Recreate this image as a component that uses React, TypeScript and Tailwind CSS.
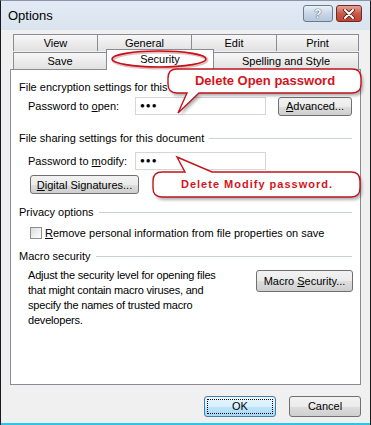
import React from 'react'

const tabBase =
  'flex items-center justify-center border border-b-0 border-[#898c95] bg-gradient-to-b from-[#f7f7f7] to-[#e1e1e1] text-[11px] text-black'

function Btn({ children, className = '' }: { children: React.ReactNode; className?: string }) {
  return (
    <div
      className={`flex items-center justify-center rounded-[3px] border border-[#707070] bg-[linear-gradient(#f2f2f2_0%,#ebebeb_50%,#dddddd_51%,#cfcfcf_100%)] text-[11px] text-black ${className}`}
    >
      <span>{children}</span>
    </div>
  )
}

function Section({ title }: { title: string }) {
  return (
    <div className="flex h-[14px] items-center gap-[5px] pr-[8px]">
      <span className="whitespace-nowrap">{title}</span>
      <div className="h-px flex-1 bg-[#c9d1d6]" />
    </div>
  )
}

function Field() {
  return (
    <div className="flex h-[18px] w-[131px] items-center border border-[#d3d6dc] bg-white pl-[4px] text-[8px] tracking-[1px]">
      ●●●
    </div>
  )
}

export default function App() {
  return (
    <div className="relative flex h-[425px] w-[371px] flex-col overflow-hidden border-x border-t border-x-[#1a1a1a] border-t-[#8a96a6] bg-[#f0f0f0] font-['Liberation_Sans',Arial,sans-serif] text-[11px] text-black">
      {/* Title bar */}
      <div className="flex h-[29px] shrink-0 items-start justify-between bg-gradient-to-b from-[#e2ebf5] to-[#dae4ef] pl-[7px] pr-[8px]">
        <span className="mt-[7px] text-[13px] leading-[16px] text-black">Options</span>
        <div className="mt-[4px] flex gap-[3px]">
          <div className="flex h-[17px] w-[30px] items-center justify-center rounded-[3px] border border-[#6d7a8b] bg-gradient-to-b from-[#e9f0f8] via-[#c9d6e6] to-[#b7c8dc] text-[12px] font-bold leading-none text-white [text-shadow:0_0_1px_#3b4a5e,0_0_1px_#3b4a5e]">
            ?
          </div>
          <div className="flex h-[17px] w-[26px] items-center justify-center rounded-[3px] border border-[#6e2a24] bg-gradient-to-b from-[#e8a496] via-[#c75a4a] to-[#c34030]">
            <svg width="12" height="10" viewBox="0 0 12 10">
              <path d="M2 1 L10 9 M10 1 L2 9" stroke="#4a1a14" strokeWidth="3.6" strokeLinecap="round" />
              <path d="M2 1 L10 9 M10 1 L2 9" stroke="#ffffff" strokeWidth="2" strokeLinecap="round" />
            </svg>
          </div>
        </div>
      </div>

      {/* Body */}
      <div className="flex flex-1 flex-col pl-[9px] pt-[4px]">
        {/* Tabs */}
        <div className="ml-[3px] flex h-[17px]">
          <div className={`${tabBase} w-[85px]`}>View</div>
          <div className={`${tabBase} -ml-px w-[95px]`}>General</div>
          <div className={`${tabBase} -ml-px w-[86px]`}>Edit</div>
          <div className={`${tabBase} -ml-px w-[83px]`}>Print</div>
        </div>
        <div className="relative z-10 ml-[3px] -mt-[2px] flex h-[20px] items-end">
          <div className={`${tabBase} h-[17px] w-[94px]`}>Save</div>
          <div className="-ml-px -mb-px flex h-[21px] w-[108px] items-start justify-center border border-b-0 border-[#898c95] bg-white pt-px text-[11px]">
            Security
          </div>
          <div className={`${tabBase} -ml-px h-[17px] w-[146px]`}>Spelling and Style</div>
        </div>

        {/* Panel */}
        <div className="flex h-[316px] w-[351px] flex-col border border-[#898c95] bg-white pl-[8px] pt-[10px] leading-[14px]">
          <Section title="File encryption settings for this document" />
          <div className="mt-[3px] flex h-[18px] items-center pl-[9px]">
            <span className="w-[107px]">
              Password to <u>o</u>pen:
            </span>
            <Field />
            <Btn className="ml-[12px] h-[19px] w-[74px]">
              <u>A</u>dvanced...
            </Btn>
          </div>

          <div className="mt-[16px]">
            <Section title="File sharing settings for this document" />
          </div>
          <div className="mt-[7px] flex h-[18px] items-center pl-[9px]">
            <span className="w-[107px]">
              Password to <u>m</u>odify:
            </span>
            <Field />
          </div>
          <div className="mt-[5px] pl-[11px]">
            <Btn className="h-[19px] w-[109px]">
              <u>D</u>igital Signatures...
            </Btn>
          </div>

          <div className="mt-[11px]">
            <Section title="Privacy options" />
          </div>
          <div className="mt-[7px] flex h-[14px] items-center gap-[3px] pl-[11px]">
            <div className="h-[12px] w-[12px] border border-[#8e8f8f] bg-gradient-to-br from-[#dcdcdc] to-[#ffffff]" />
            <span>
              <u>R</u>emove personal information from file properties on save
            </span>
          </div>

          <div className="mt-[9px]">
            <Section title="Macro security" />
          </div>
          <div className="mt-[5px] flex items-start pl-[9px]">
            <p className="w-[218px] whitespace-nowrap leading-[15px] tracking-[-0.2px]">
              Adjust the security level for opening files
              <br />
              that might contain macro viruses, and
              <br />
              specify the names of trusted macro
              <br />
              developers.
            </p>
            <Btn className="ml-[10px] mt-[2px] h-[22px] w-[97px]">
              Macro <u>S</u>ecurity...
            </Btn>
          </div>
        </div>

        {/* Bottom buttons */}
        <div className="mt-[11px] flex justify-end gap-[13px] pr-[9px]">
          <div className="flex h-[21px] w-[72px] items-center justify-center rounded-[3px] border border-[#3c7fb1] bg-[linear-gradient(#eaf6fd_0%,#d9f0fc_50%,#bee6fd_51%,#a7d9f5_100%)] p-[2px]">
            <div className="flex h-full w-full items-center justify-center border border-dotted border-black">OK</div>
          </div>
          <Btn className="h-[21px] w-[72px]">Cancel</Btn>
        </div>
      </div>
      <div className="h-[2px] shrink-0 bg-[#29c6e8]" />

      {/* Annotations */}
      <svg className="pointer-events-none absolute left-[-1px] top-[-1px] z-20" width="371" height="425" viewBox="0 0 371 425">
        <defs>
          <filter id="sh" x="-10%" y="-30%" width="130%" height="180%">
            <feGaussianBlur stdDeviation="1.5" />
          </filter>
        </defs>
        <ellipse cx="159" cy="59" rx="47" ry="8" fill="none" stroke="#8a0000" strokeOpacity="0.25" strokeWidth="3" transform="translate(1 1)" />
        <ellipse cx="159" cy="59" rx="47" ry="8" fill="none" stroke="#c8101a" strokeWidth="1.6" />

        <path
          d="M 177 69 H 352 Q 361 69 361 78 V 84 Q 361 93 352 93 H 199 L 178 113 L 187 93 H 177 Q 168 93 168 84 V 78 Q 168 69 177 69 Z"
          fill="#000"
          fillOpacity="0.3"
          transform="translate(2 3)"
          filter="url(#sh)"
        />
        <path
          d="M 177 69 H 352 Q 361 69 361 78 V 84 Q 361 93 352 93 H 199 L 178 113 L 187 93 H 177 Q 168 93 168 84 V 78 Q 168 69 177 69 Z"
          fill="#ffffff"
          stroke="#c0141c"
          strokeWidth="1.4"
        />

        <path
          d="M 162 172 H 185 L 177 157 L 212 172 H 351 Q 360 172 360 181 V 188 Q 360 197 351 197 H 162 Q 153 197 153 188 V 181 Q 153 172 162 172 Z"
          fill="#000"
          fillOpacity="0.3"
          transform="translate(2 3)"
          filter="url(#sh)"
        />
        <path
          d="M 162 172 H 185 L 177 157 L 212 172 H 351 Q 360 172 360 181 V 188 Q 360 197 351 197 H 162 Q 153 197 153 188 V 181 Q 153 172 162 172 Z"
          fill="#ffffff"
          stroke="#c0141c"
          strokeWidth="1.4"
        />
      </svg>
      <div className="pointer-events-none absolute left-[168px] top-[68px] z-30 flex h-[24px] w-[192px] items-center justify-center text-[13px] font-bold text-[#d3141c]">
        Delete Open password
      </div>
      <div className="pointer-events-none absolute left-[153px] top-[171px] z-30 flex h-[25px] w-[206px] items-center justify-center text-[11px] font-bold tracking-[1px] text-[#d3141c]">
        Delete Modify password.
      </div>
    </div>
  )
}
